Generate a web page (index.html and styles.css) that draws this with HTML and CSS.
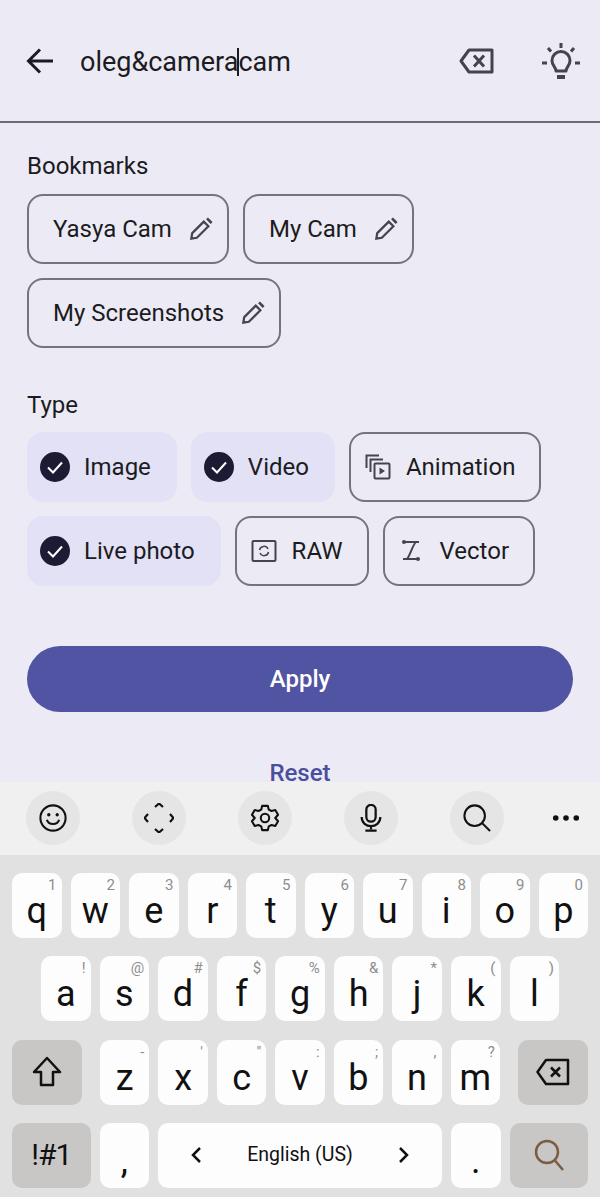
FILE: index.html
```html
<!DOCTYPE html>
<html lang="en">

<head>
    <meta charset="UTF-8">
    <meta name="viewport" content="width=device-width, initial-scale=1.0">
    <title>Search</title>
    <link rel="stylesheet" href="styles.css">
</head>

<body>
    <div class="app">
        <div class="content">
            <header class="search-bar">
                <svg class="back-icon" width="30" height="30" viewBox="0 0 30 30" fill="none" stroke="#1c1b22" stroke-width="3">
                    <path d="M28 15H4M15 3.500 3.500 15 15 26.500" />
                </svg>
                <div class="query">oleg&amp;camera<span class="caret"></span>cam</div>
                <svg class="clear-icon" width="36" height="28" viewBox="0 0 36 28" fill="none" stroke="#45444e" stroke-width="3">
                    <path d="M10 3H33V25H10L2 14ZM15 8.500 25 19.500M25 8.500 15 19.500" stroke-linejoin="round" />
                </svg>
                <svg class="bulb-icon" width="40" height="40" viewBox="0 0 40 40" fill="none" stroke="#45444e" stroke-width="3">
                    <path d="M20 1V6M7 6 10 9.500M33 6 30 9.500M1 21H6M34 21H39" />
                    <path d="M15 29C15 25 11 24 11 18.500A9 9 0 0 1 29 18.500C29 24 25 25 25 29Z" stroke-linejoin="round" />
                    <path d="M16 35H24" stroke-width="4" />
                </svg>
            </header>

            <section class="group bookmarks">
                <h2>Bookmarks</h2>
                <div class="chips">
                    <div class="chip chip-edit">Yasya Cam
                        <svg width="24" height="26" viewBox="0 0 26 26" fill="none" stroke="#45444e" stroke-width="2.400"><path d="M2.500 23.500 3.500 17.500 16 5 21 10 8.500 22.500Z" /><path d="M18.500 2.500 20.500 0.500 25.500 5.500 23.500 7.500Z" fill="#45444e" stroke="none" /></svg>
                    </div>
                    <div class="chip chip-edit">My Cam
                        <svg width="24" height="26" viewBox="0 0 26 26" fill="none" stroke="#45444e" stroke-width="2.400"><path d="M2.500 23.500 3.500 17.500 16 5 21 10 8.500 22.500Z" /><path d="M18.500 2.500 20.500 0.500 25.500 5.500 23.500 7.500Z" fill="#45444e" stroke="none" /></svg>
                    </div>
                    <div class="chip chip-edit">My Screenshots
                        <svg width="24" height="26" viewBox="0 0 26 26" fill="none" stroke="#45444e" stroke-width="2.400"><path d="M2.500 23.500 3.500 17.500 16 5 21 10 8.500 22.500Z" /><path d="M18.500 2.500 20.500 0.500 25.500 5.500 23.500 7.500Z" fill="#45444e" stroke="none" /></svg>
                    </div>
                </div>
            </section>

            <section class="group types">
                <h2>Type</h2>
                <div class="chips">
                    <div class="chip chip-on">
                        <svg width="30" height="30" viewBox="0 0 30 30"><circle cx="15" cy="15" r="15" fill="#1c1b33" /><path d="M8 15.500 13 20.500 22 10.500" fill="none" stroke="#fff" stroke-width="2" /></svg>
                        Image
                    </div>
                    <div class="chip chip-on">
                        <svg width="30" height="30" viewBox="0 0 30 30"><circle cx="15" cy="15" r="15" fill="#1c1b33" /><path d="M8 15.500 13 20.500 22 10.500" fill="none" stroke="#fff" stroke-width="2" /></svg>
                        Video
                    </div>
                    <div class="chip chip-off">
                        <svg width="26" height="26" viewBox="0 0 26 26" fill="none" stroke="#45444e" stroke-width="2"><path d="M1.500 14V1.500H14M5.500 18V5.500H18" /><rect x="9.500" y="9.500" width="15" height="15" rx="1" /><path d="M14.500 13.500 20 17 14.500 20.500Z" fill="#45444e" stroke="none" /></svg>
                        Animation
                    </div>
                    <div class="chip chip-on">
                        <svg width="30" height="30" viewBox="0 0 30 30"><circle cx="15" cy="15" r="15" fill="#1c1b33" /><path d="M8 15.500 13 20.500 22 10.500" fill="none" stroke="#fff" stroke-width="2" /></svg>
                        Live photo
                    </div>
                    <div class="chip chip-off">
                        <svg width="26" height="26" viewBox="0 0 26 26" fill="none" stroke="#45444e" stroke-width="2"><rect x="1.500" y="3" width="23" height="20" rx="1" /><path d="M8.500 12A4.500 4.500 0 0 1 17 11M17.500 14A4.500 4.500 0 0 1 9 15" stroke-width="1.500" /></svg>
                        RAW
                    </div>
                    <div class="chip chip-off">
                        <svg width="26" height="26" viewBox="0 0 26 26" fill="none" stroke="#45444e" stroke-width="2"><path d="M5 4H20M17 4C14 6 11 18 8 21M4 21H19" /><circle cx="5" cy="4" r="2" fill="#45444e" stroke="none" /><circle cx="19" cy="21" r="2" fill="#45444e" stroke="none" /></svg>
                        Vector
                    </div>
                </div>
            </section>

            <button class="apply" type="button">Apply</button>
            <div class="reset">Reset</div>
        </div>

        <div class="toolbar">
            <div class="tool">
                <svg width="28" height="28" viewBox="0 0 30 30" fill="none" stroke="#111" stroke-width="2.200"><circle cx="15" cy="15" r="13.500" /><path d="M8.500 17C10 23 20 23 21.500 17" /><circle cx="10.500" cy="11.500" r="1.800" fill="#111" stroke="none" /><circle cx="19.500" cy="11.500" r="1.800" fill="#111" stroke="none" /></svg>
            </div>
            <div class="tool">
                <svg width="30" height="30" viewBox="0 0 30 30" fill="none" stroke="#111" stroke-width="2.200"><path d="M11 4 15 0.500 19 4M11 26 15 29.500 19 26M4 11 0.500 15 4 19M26 11 29.500 15 26 19" /></svg>
            </div>
            <div class="tool">
                <svg width="28" height="28" viewBox="0 0 30 30" fill="none" stroke="#111" stroke-width="2.200"><path d="M12 2H18L19 6 22 7.500 26 6.500 29 11.500 26 15 29 18.500 26 23.500 22 22.500 19 24 18 28H12L11 24 8 22.500 4 23.500 1 18.500 4 15 1 11.500 4 6.500 8 7.500 11 6Z" stroke-linejoin="round" /><circle cx="15" cy="15" r="4.500" /></svg>
            </div>
            <div class="tool">
                <svg width="28" height="28" viewBox="0 0 30 30" fill="none" stroke="#111" stroke-width="2.400"><rect x="10" y="1" width="10" height="18" rx="5" /><path d="M5 14C5 27 25 27 25 14M15 24V27M9 28.500H21" /></svg>
            </div>
            <div class="tool">
                <svg width="28" height="28" viewBox="0 0 30 30" fill="none" stroke="#111" stroke-width="2.200"><circle cx="12.500" cy="12.500" r="11" /><path d="M20.500 20.500 29 29" /></svg>
            </div>
            <div class="tool tool-plain">
                <svg width="28" height="8" viewBox="0 0 30 8" fill="#111"><circle cx="4" cy="4" r="3" /><circle cx="15" cy="4" r="3" /><circle cx="26" cy="4" r="3" /></svg>
            </div>
        </div>

        <div class="keyboard">
            <div class="key-row">
                <div class="key"><i>1</i>q</div>
                <div class="key"><i>2</i>w</div>
                <div class="key"><i>3</i>e</div>
                <div class="key"><i>4</i>r</div>
                <div class="key"><i>5</i>t</div>
                <div class="key"><i>6</i>y</div>
                <div class="key"><i>7</i>u</div>
                <div class="key"><i>8</i>i</div>
                <div class="key"><i>9</i>o</div>
                <div class="key"><i>0</i>p</div>
            </div>
            <div class="key-row row-inset">
                <div class="key"><i>!</i>a</div>
                <div class="key"><i>@</i>s</div>
                <div class="key"><i>#</i>d</div>
                <div class="key"><i>$</i>f</div>
                <div class="key"><i>%</i>g</div>
                <div class="key"><i>&amp;</i>h</div>
                <div class="key"><i>*</i>j</div>
                <div class="key"><i>(</i>k</div>
                <div class="key"><i>)</i>l</div>
            </div>
            <div class="key-row">
                <div class="key key-fn key-shift">
                    <svg width="30" height="32" viewBox="0 0 30 32" fill="none" stroke="#111" stroke-width="2.500"><path d="M15 2 28 16H21V29H9V16H2Z" stroke-linejoin="round" /></svg>
                </div>
                <div class="key key-z"><i>-</i>z</div>
                <div class="key"><i>'</i>x</div>
                <div class="key"><i>"</i>c</div>
                <div class="key"><i>:</i>v</div>
                <div class="key"><i>;</i>b</div>
                <div class="key"><i>,</i>n</div>
                <div class="key"><i>?</i>m</div>
                <div class="key key-fn key-del">
                    <svg width="34" height="28" viewBox="0 0 34 28" fill="none" stroke="#111" stroke-width="2.500"><path d="M10 2H32V26H10L1.500 14ZM15 9.500 24 18.500M24 9.500 15 18.500" stroke-linejoin="round" /></svg>
                </div>
            </div>
            <div class="key-row">
                <div class="key key-fn key-sym">!#1</div>
                <div class="key key-punct">,</div>
                <div class="key key-space">
                    <svg width="12" height="18" viewBox="0 0 12 18" fill="none" stroke="#111" stroke-width="2.500"><path d="M10 2 3 9 10 16" /></svg>
                    <span>English (US)</span>
                    <svg width="12" height="18" viewBox="0 0 12 18" fill="none" stroke="#111" stroke-width="2.500"><path d="M2 2 9 9 2 16" /></svg>
                </div>
                <div class="key key-punct">.</div>
                <div class="key key-fn key-sym">
                    <svg width="30" height="32" viewBox="0 0 30 32" fill="none" stroke="#7a5c42" stroke-width="2.500"><circle cx="13" cy="13" r="11" /><path d="M20.500 21 29 31" /></svg>
                </div>
            </div>
        </div>
    </div>
</body>

</html>
```

FILE: styles.css
```css
* {
    font-family: Roboto, sans-serif;
    box-sizing: border-box;
}
html,
body {
    margin: 0;
    padding: 0;
}
.app {
    width: 600px;
    height: 1197px;
    display: flex;
    flex-direction: column;
    overflow: hidden;
    background: #ecebf5;
}
.content {
    height: 782px;
    overflow: hidden;
}

/* search bar */
.search-bar {
    height: 123px;
    padding: 42px 19px 0 25px;
    display: flex;
    align-items: flex-start;
    border-bottom: 2px solid #6d6c76;
}
.back-icon {
    margin-top: 4px;
}
.query {
    margin-left: 25px;
    flex: 1;
    font-size: 27px;
    line-height: 40px;
    color: #1c1b22;
}
.caret {
    display: inline-block;
    width: 2px;
    height: 28px;
    margin: 0 -1px -5px -1px;
    background: #1c1b22;
}
.clear-icon {
    margin: 5px 46px 0 0;
}

/* chip groups */
.group {
    padding: 0 27px;
}
.group h2 {
    margin: 0;
    font-size: 24px;
    line-height: 30px;
    font-weight: 400;
    color: #1c1b22;
}
.bookmarks {
    padding-top: 28px;
}
.types {
    padding-top: 42px;
}
.chips {
    margin-top: 13px;
    display: flex;
    flex-wrap: wrap;
    gap: 13.500px 14px;
}
.types .chips {
    margin-top: 12.500px;
}
.chip {
    height: 70px;
    display: flex;
    align-items: center;
    font-size: 24px;
    color: #1c1b22;
    border-radius: 16px;
}
.chip-edit {
    padding: 0 14px 0 24px;
    gap: 17px;
    border: 2px solid #75747e;
}
.chip-on {
    padding: 0 26px 0 13px;
    gap: 14px;
    background: #e2e1f6;
}
.chip-off {
    padding: 0 24px 0 14px;
    gap: 15px;
    border: 2px solid #75747e;
}

/* actions */
.apply {
    display: block;
    width: 546px;
    height: 66px;
    margin: 60.500px 27px 0;
    border: none;
    border-radius: 33px;
    background: #5054a3;
    color: #fff;
    font-size: 24px;
    font-weight: 500;
}
.reset {
    margin-top: 46px;
    text-align: center;
    font-size: 24px;
    line-height: 30px;
    font-weight: 500;
    color: #4a4e9e;
}

/* keyboard toolbar */
.toolbar {
    height: 73px;
    padding: 9px 0 0 26px;
    display: flex;
    gap: 52px;
    background: #f0f0f0;
}
.tool {
    flex: none;
    width: 54px;
    height: 54px;
    display: flex;
    align-items: center;
    justify-content: center;
    border-radius: 50%;
    background: #e5e5e5;
}
.tool-plain {
    width: 28px;
    margin-left: -4px;
    background: none;
}

/* keyboard */
.keyboard {
    flex: 1;
    padding: 18px 12px 0;
    display: flex;
    flex-direction: column;
    gap: 18.300px;
    background: #e1e1e1;
}
.key-row {
    display: flex;
    gap: 9px;
}
.row-inset {
    padding: 0 29px;
}
.key {
    position: relative;
    flex: 1;
    height: 65px;
    padding-top: 14px;
    text-align: center;
    font-size: 36px;
    line-height: 48px;
    color: #111;
    background: #fdfdfd;
    border-radius: 10px;
}
.key i {
    position: absolute;
    top: 2px;
    right: 5px;
    font-style: normal;
    font-size: 15px;
    line-height: 20px;
    color: #8e8e8e;
}
.key-fn {
    background: #c8c7c5;
    display: flex;
    align-items: center;
    justify-content: center;
    padding-top: 0;
}
.key-shift,
.key-del {
    flex: none;
    width: 70px;
}
.key-z,
.key-del {
    margin-left: 9px;
}
.key-sym {
    flex: none;
    width: 78.500px;
    font-size: 30px;
    letter-spacing: -1px;
}
.key-punct {
    flex: none;
    width: 49.500px;
}
.key-space {
    flex: 1;
    padding: 0 32px;
    display: flex;
    align-items: center;
    justify-content: space-between;
    font-size: 19.500px;
}
```
